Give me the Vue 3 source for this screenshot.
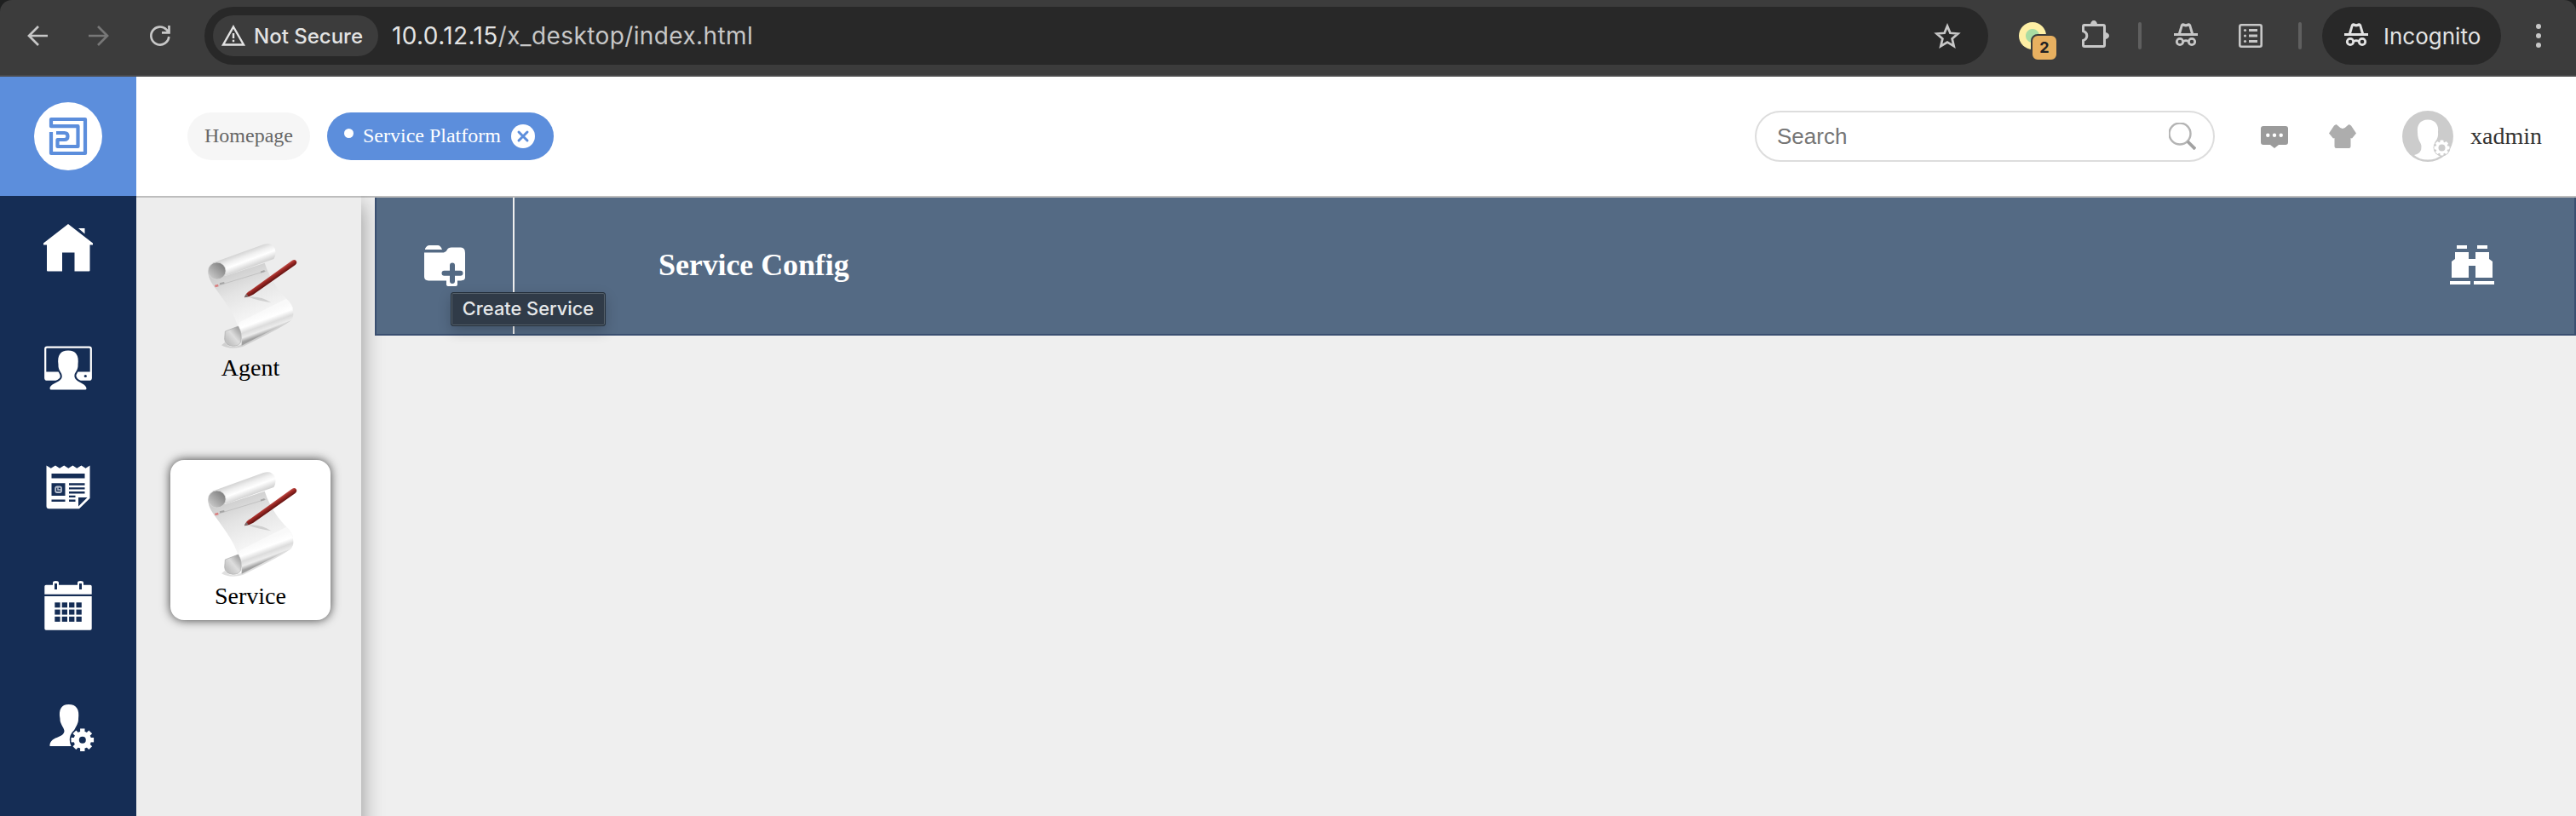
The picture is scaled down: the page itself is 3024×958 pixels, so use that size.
<script setup>
const tiles = [
  { name: 'Agent', active: false },
  { name: 'Service', active: true },
]
const calendarCells = [0, 1, 2].flatMap((r) => [0, 1, 2, 3].map((c) => ({ x: 64.3 + c * 8.4, y: 707.3 + r * 8.3 })))
const teeth = [0, 45, 90, 135, 180, 225, 270, 315]
</script>

<template>
  <div class="window">
    <div class="browser-frame">
      <div class="browser">
        <svg class="nav back" viewBox="30 28 28 28"><path d="M56 42H34M45 31L34 42L45 53" /></svg>
        <svg class="nav forward" viewBox="102 28 28 28"><path d="M104 42H126M115 31L126 42L115 53" /></svg>
        <svg class="nav reload" viewBox="174 28 28 28">
          <path d="M198.3 43A10.5 10.5 0 1 1 195.5 34.8L198 37.5M198.5 30V38.4H190" />
        </svg>
        <div class="omnibox">
          <div class="chip">
            <svg class="warn" viewBox="259 28 30 28">
              <path d="M274 31.5L286 52.5H262Z" fill="none" stroke="#e3e3e3" stroke-width="2.4" />
              <path d="M274 39V45M274 46.8V49.2" stroke="#e3e3e3" stroke-width="2.4" />
            </svg>
            <span>Not Secure</span>
          </div>
          <div class="url">10.0.12.15<span>/x_desktop/index.html</span></div>
          <svg class="star" viewBox="2270 24 34 34">
            <path d="M2286 29.5L2289.4 37.8L2298.4 38.5L2291.6 44.4L2293.7 53.2L2286 48.5L2278.3 53.2L2280.4 44.4L2273.6 38.5L2282.6 37.8Z" />
          </svg>
        </div>
        <div class="extension">
          <span class="disc"></span>
          <span class="badge">2</span>
        </div>
        <svg class="puzzle" viewBox="2440 22 40 40">
          <path d="M2446 29.5H2469Q2470.5 29.5 2470.5 31V53Q2470.5 54.5 2469 54.5H2447Q2445.5 54.5 2445.5 53V47.5Q2449.8 46 2449.8 42T2445.5 36.5V31Q2445.5 29.5 2447 29.5" fill="none" stroke="#c7c7c7" stroke-width="3" />
          <path d="M2454 29a4 5 0 0 1 8 0ZM2471 38a5 4 0 0 1 0 8Z" fill="#c7c7c7" />
        </svg>
        <i class="sep first"></i>
        <svg class="incog" viewBox="2548 24 36 36">
          <path d="M2552 39H2580V42H2552ZM2557 39L2560 29Q2561 27 2563 27.3L2566 28.3L2569 27.3Q2571 27 2572 29L2575 39H2571.8L2569.5 30.7L2566 31.6L2562.5 30.7L2560.2 39Z" fill="#c7c7c7" />
          <g fill="none" stroke="#c7c7c7" stroke-width="2.8"><circle cx="2559" cy="49" r="3.7" /><circle cx="2573" cy="49" r="3.7" /><path d="M2563 48.4Q2566 47 2569 48.4" /></g>
        </svg>
        <svg class="list" viewBox="2624 24 36 36">
          <rect x="2629.3" y="29.3" width="25.4" height="25.4" rx="2" fill="none" stroke="#c7c7c7" stroke-width="2.6" />
          <path d="M2640 35.5H2650M2640 42H2650M2640 48.5H2650" stroke="#c7c7c7" stroke-width="2.8" />
          <g fill="#c7c7c7"><circle cx="2635.5" cy="35.5" r="1.6" /><circle cx="2635.5" cy="42" r="1.6" /><circle cx="2635.5" cy="48.5" r="1.6" /></g>
        </svg>
        <i class="sep second"></i>
        <div class="incognito">
          <svg viewBox="2548 24 36 36">
            <path d="M2552 39H2580V42H2552ZM2557 39L2560 29Q2561 27 2563 27.3L2566 28.3L2569 27.3Q2571 27 2572 29L2575 39H2571.8L2569.5 30.7L2566 31.6L2562.5 30.7L2560.2 39Z" fill="#e3e3e3" />
            <g fill="none" stroke="#e3e3e3" stroke-width="2.8"><circle cx="2559" cy="49" r="3.7" /><circle cx="2573" cy="49" r="3.7" /><path d="M2563 48.4Q2566 47 2569 48.4" /></g>
          </svg>
          <span>Incognito</span>
        </div>
        <svg class="more" viewBox="2970 26 20 32"><g fill="#c7c7c7"><circle cx="2980" cy="31" r="3" /><circle cx="2980" cy="42" r="3" /><circle cx="2980" cy="53" r="3" /></g></svg>
      </div>
    </div>

    <header class="header">
      <div class="logo">
        <svg viewBox="40 120 80 80">
          <circle cx="80" cy="160" r="40" fill="#fff" />
          <path d="M92 148.200H60V140H100V180H60V155M60 148.200H91.500V172H67.500V164H75.500Q79.500 164 79.500 160T75.500 156H66" fill="none" stroke="#5c8edc" stroke-width="4.200" stroke-linejoin="round" />
        </svg>
      </div>
      <nav class="tabs">
        <div class="tab">Homepage</div>
        <div class="tab current">
          <i class="dot"></i><span>Service Platform</span>
          <svg viewBox="600 146 28 28">
            <circle cx="614" cy="160" r="14" fill="#fff" />
            <path d="M609 155L619 165M619 155L609 165" stroke="#5c8edc" stroke-width="3" stroke-linecap="round" />
          </svg>
        </div>
      </nav>
      <div class="search">
        <span>Search</span>
        <svg viewBox="2546 144 32 32" fill="none"><circle cx="2559" cy="157" r="12.5" stroke="#b4b4b4" stroke-width="2.4" /><path d="M2568 166L2577 175" stroke="#a2a2a2" stroke-width="3.8" /></svg>
      </div>
      <svg class="chat" viewBox="2654 144 32 32">
        <path d="M2657 148H2683Q2686 148 2686 151V167Q2686 170 2683 170H2675L2670 174L2665 170H2657Q2654 170 2654 167V151Q2654 148 2657 148Z" fill="#9b9b9b" />
        <g fill="#fff"><circle cx="2662.3" cy="158.7" r="2.2" /><circle cx="2670" cy="158.7" r="2.2" /><circle cx="2677.7" cy="158.7" r="2.2" /></g>
      </svg>
      <svg class="shirt" viewBox="2734 144 32 32">
        <path d="M2742.5 146L2745 148Q2750 154 2755 148L2757.5 146L2760 147.5L2766 156.5L2761 162.5L2759.5 162V172Q2759.5 174 2757.5 174H2742.5Q2740.5 174 2740.5 172V162L2739 162.5L2734 156.5L2740 147.5Z" fill="#adadad" />
      </svg>
      <svg class="avatar" viewBox="2820 130 60 60">
        <circle cx="2850" cy="160" r="30" fill="#ccc" />
        <path d="M2850 140.5C2859 140.5 2863 147 2862 155C2862.8 163 2859 165 2858 168C2857 175 2858 179 2866 182Q2860 187.5 2850 187.5T2834 182Q2843 180 2842.5 172C2842.5 167 2838 166 2838 155C2837 147 2841 140.5 2850 140.5Z" fill="#fff" />
        <g transform="translate(2866.5 173.5)">
          <circle r="10" fill="#ccc" />
          <g fill="#fff"><circle r="7" /><rect v-for="t in teeth" :key="t" x="-2" y="-9" width="4" height="5" rx="1" :transform="`rotate(${t})`" /></g>
          <circle r="4" fill="#ccc" />
        </g>
      </svg>
      <span class="user">xadmin</span>
    </header>

    <div class="body">
      <aside class="sidebar">
        <svg viewBox="48 260 64 64" fill="#fff">
          <path d="M80 263L109 285.5V287.5H105.5V317.5Q105.5 318.5 104.5 318.5H87.5V296.5H73V318.5H56Q55 318.5 55 317.5V287.5H51V285.5ZM92 268H99.5V274.5Z" />
        </svg>
        <svg viewBox="48 400 64 64">
          <rect x="53.2" y="407.7" width="53.6" height="38" rx="2" fill="none" stroke="#fff" stroke-width="2.2" />
          <path d="M53 436.5H107V446H53Z" fill="#fff" />
          <circle cx="100.3" cy="441.5" r="1.6" fill="#152d55" />
          <path d="M80 411.5C89 411.5 93 417 91.5 428C92 434 88 437 87.5 440C86 449 101 449 101.5 456Q101.5 457.5 100 457.5H60Q58.5 457.5 58.5 456C59 449 75 449 72.5 440C72 437 68 434 68.5 428C67 417 71 411.5 80 411.5Z" fill="#fff" stroke="#152d55" stroke-width="4" paint-order="stroke" />
        </svg>
        <svg viewBox="48 540 64 64">
          <path d="M54.5 546.5L59.8 549.8L65 546.5L70 549.8L75.2 546.5L80.3 549.8L85.4 546.5L90.3 549.8L95.5 546.5L100.5 549.8L105.5 546.5V585L93 597.3H57.5Q54.5 597.3 54.5 594.3Z" fill="#fff" />
          <path d="M60.5 556H99.5V561.5H60.5ZM60.5 567.3H76.5V582H60.5ZM81 567.3H99.5V569.8H81ZM81 572.3H99.5V574.6H81ZM81 577H99.5V579.4H81ZM81 581.8H88.5V584H81ZM81 586.5H88.5V589H81ZM60.5 586.5H76.5V589H60.5ZM92 584H102.5L92 594.5Z" fill="#152d55" />
          <rect x="65.200" y="571.500" width="6.800" height="6.500" rx="1.800" fill="none" stroke="#b9c1cf" stroke-width="1.800" />
          <path d="M68 572V575H72" fill="none" stroke="#b9c1cf" stroke-width="1.400" />
        </svg>
        <svg viewBox="48 680 64 64">
          <path d="M54 686.7H62V684Q62 682 65.5 682T69 684V686.7H91V684Q91 682 94.5 682T98 684V686.7H106Q107.7 686.7 107.7 688.5V697.7H52.3V688.5Q52.3 686.7 54 686.7ZM52.3 700H107.7V738Q107.7 739.7 106 739.7H54Q52.3 739.7 52.3 738Z" fill="#fff" />
          <path d="M64 685H67V692H64ZM93 685H96V692H93Z" fill="#152d55" />
          <rect v-for="(c, i) in calendarCells" :key="i" :x="c.x" :y="c.y" width="6.3" height="6" fill="#152d55" />
        </svg>
        <svg viewBox="48 820 64 64">
          <path d="M80.5 827C90 827 93.500 833 92 844C92.500 850 86.500 856 86.500 860L88 876H58.500C58 864 75.500 867 75.500 858C75 854 70 849 70.500 844C68.500 833 72 827 80.500 827Z" fill="#fff" />
          <g transform="translate(96.800 868.700)">
            <circle r="15" fill="#152d55" />
            <g fill="#fff"><circle r="10.300" /><rect v-for="t in teeth" :key="t" x="-2.700" y="-13.300" width="5.400" height="6" :transform="`rotate(${t})`" /></g>
            <circle r="4" fill="#152d55" />
          </g>
        </svg>
      </aside>

      <section class="modules">
        <div v-for="tile in tiles" :key="tile.name" class="tile" :class="{ active: tile.active }">
          <svg viewBox="240 120 336 384">
            <defs>
              <linearGradient id="roll" gradientUnits="userSpaceOnUse" x1="364" y1="162" x2="388" y2="226">
                <stop offset="0" stop-color="#cfcfcf" /><stop offset="0.3" stop-color="#efefef" /><stop offset="0.55" stop-color="#ffffff" /><stop offset="1" stop-color="#c8c8c8" />
              </linearGradient>
              <linearGradient id="hollow" x1="0.9" y1="0.2" x2="0.2" y2="0.9">
                <stop offset="0" stop-color="#808080" /><stop offset="1" stop-color="#c6c6c6" />
              </linearGradient>
              <linearGradient id="curl" x1="1" y1="0" x2="0.2" y2="0.8">
                <stop offset="0" stop-color="#8c8c8c" /><stop offset="0.6" stop-color="#dedede" /><stop offset="1" stop-color="#c2c2c2" />
              </linearGradient>
              <linearGradient id="base" gradientUnits="userSpaceOnUse" x1="440" y1="375" x2="466" y2="446">
                <stop offset="0" stop-color="#f9f9f9" /><stop offset="0.35" stop-color="#ffffff" /><stop offset="0.6" stop-color="#dcdcdc" /><stop offset="0.8" stop-color="#ececec" /><stop offset="1" stop-color="#a0a0a0" />
              </linearGradient>
              <linearGradient id="paper" gradientUnits="userSpaceOnUse" x1="340" y1="225" x2="410" y2="410">
                <stop offset="0" stop-color="#cdcdcd" /><stop offset="0.4" stop-color="#e4e4e4" /><stop offset="1" stop-color="#f8f8f8" />
              </linearGradient>
              <linearGradient id="pen" gradientUnits="userSpaceOnUse" x1="467" y1="246" x2="478" y2="262">
                <stop offset="0" stop-color="#c65a54" /><stop offset="0.45" stop-color="#a02a26" /><stop offset="1" stop-color="#6b1715" />
              </linearGradient>
            </defs>
            <path d="M312 480Q330 505 365 490L548 400Q520 425 375 495Q330 508 300 490Z" fill="#000" opacity="0.12" />
            <path d="M252 228C254 262 272 280 292 308C322 350 348 388 358 424L372 455L552 360C545 335 520 322 495 286C475 256 462 230 452 200L316 245Z" fill="url(#paper)" />
            <path d="M358 424Q374 452 371 491L546 401Q556 388 552 368Q548 342 528 326L365 408Z" fill="url(#base)" />
            <path d="M313 441L359 423Q374 450 368 478Q362 493 340 493Q312 490 311 468Z" fill="url(#curl)" stroke="#aaa" stroke-width="2" />
            <path d="M268 200L448 135Q477 126 488 150Q494 172 484 186L316 245Z" fill="url(#roll)" />
            <ellipse cx="284" cy="228" rx="31" ry="30" fill="url(#hollow)" stroke="#d6d6d6" stroke-width="2" />
            <path d="M290 279L458 228" stroke="#c2c2c2" stroke-width="3" />
            <path d="M277 282L289 279" stroke="#d98080" stroke-width="8" />
            <path d="M294 274L310 270M438 233L452 228" stroke="#a5a5a5" stroke-width="6" />
            <path d="M395 320Q440 315 475 340Q430 332 395 320Z" fill="#999" opacity="0.35" />
            <path d="M381 322Q386 304 402 297L549 191Q558 186 563 193T560 207L412 311Q398 320 381 322Z" fill="url(#pen)" />
            <path d="M381 322Q383 314 389 309L394 318Z" fill="#777" />
          </svg>
          <span>{{ tile.name }}</span>
        </div>
      </section>

      <main class="content">
        <div class="toolbar">
          <div class="create">
            <svg viewBox="498 288 48 48">
              <path d="M499 292Q501 288 504 288H514Q517 288 519 293H499ZM498 296.500H521Q524 296 525 293Q526 290.500 530 290.500H541Q546 290.500 546 297V326Q546 329 541 329.500H537V334Q537 336 534 336H527Q524 336 524 334V329.500H503Q498 329 498 325Z" fill="#fff" />
              <path d="M531 311.500V330M521.500 320.800H540.500" stroke="#546a84" stroke-width="6" stroke-linecap="round" />
            </svg>
            <div class="tooltip">Create Service</div>
          </div>
          <h1>Service Config</h1>
          <svg class="find" viewBox="2874 284 56 54" fill="#fff">
            <path d="M2884 288H2896V292H2884ZM2908 288H2920V292H2908ZM2882 296H2898V304H2906V296H2922V304L2926 307V326H2906V312H2898V326H2878V307L2882 304ZM2876 330H2900V334H2876ZM2904 330H2928V334H2904Z" />
          </svg>
        </div>
      </main>
    </div>
  </div>
</template>

<style>
body { margin: 0; }
</style>

<style scoped>
* { box-sizing: border-box; }
svg { display: block; flex: none; }
.window { width: 3024px; height: 958px; overflow: hidden; display: flex; flex-direction: column; background: #efefef; font-family: "Liberation Serif", serif; }
.browser-frame { height: 90px; flex: none; background: #1f2020; }
.browser { height: 90px; display: flex; align-items: center; padding: 0 34px 6px 30px; background: #3c3c3c; border-bottom: 2px solid #4a4a4b; border-radius: 14px 14px 0 0; font-family: Inter, sans-serif; }
.nav { width: 28px; height: 28px; fill: none; stroke: #c7c7c7; stroke-width: 2.7; margin-top: 2px; }
.forward { stroke: #777; margin-left: 44px; }
.reload { margin-left: 44px; }
.omnibox { flex: 1; height: 68px; margin: 2px 0 0 38px; padding: 0 30px 0 10px; display: flex; align-items: center; border-radius: 34px; background: #282828; }
.chip { width: 194px; height: 48px; padding-left: 9px; display: flex; align-items: center; border-radius: 24px; background: #3c3c3c; color: #e3e3e3; font-size: 24px; font-weight: 500; white-space: nowrap; }
.warn { width: 30px; height: 28px; margin-right: 9px; }
.url { flex: 1; margin-left: 16px; font-size: 28px; letter-spacing: 0.39px; color: #e3e3e3; white-space: nowrap; }
.url span { color: #c7c7c7; }
.star { width: 34px; height: 34px; fill: none; stroke: #c7c7c7; stroke-width: 2.7; }
.extension { position: relative; width: 52px; height: 52px; margin: 20px 0 0 32px; }
.disc { position: absolute; left: 4px; top: 1px; width: 32px; height: 32px; border-radius: 50%; background: radial-gradient(circle, #a9dca3 0 7.5px, #feefa5 8.5px); }
.badge { position: absolute; left: 18px; top: 15px; width: 32px; height: 32px; border-radius: 8px; background: #e8b060; border: 2px solid #3c3c3c; color: #202124; font-size: 18px; font-weight: 700; line-height: 28px; text-align: center; }
.puzzle { width: 40px; height: 40px; margin: 2px 0 0 22px; }
.sep { width: 4px; height: 32px; border-radius: 2px; background: #5f5f5f; margin-top: 2px; }
.first { margin-left: 30px; }
.incog { width: 36px; height: 36px; margin: 2px 0 0 34px; }
.list { width: 36px; height: 36px; margin: 2px 0 0 40px; }
.second { margin-left: 38px; }
.incognito { width: 210px; height: 68px; margin: 2px 0 0 24px; padding-left: 22px; display: flex; align-items: center; border-radius: 34px; background: #282828; color: #e3e3e3; font-size: 26px; }
.incognito svg { width: 36px; height: 36px; margin-right: 14px; }
.more { width: 20px; height: 32px; margin: 2px 0 0 34px; }

.header { position: relative; z-index: 2; height: 140px; flex: none; display: flex; align-items: center; background: #fff; }
.logo { width: 160px; height: 140px; display: flex; align-items: center; justify-content: center; background: #5c8edc; }
.logo svg { width: 80px; height: 80px; }
.tabs { flex: 1; display: flex; gap: 20px; padding-left: 60px; font-size: 24px; }
.tab { height: 56px; padding: 0 20px 2px; display: flex; align-items: center; border-radius: 28px; background: #f6f6f6; color: #666; white-space: nowrap; }
.current { width: 266px; padding: 0 22px 2px 20px; background: #5c8edc; color: #fff; }
.dot { width: 11px; height: 11px; margin: -5px 11px 0 0; border-radius: 50%; background: #fff; }
.current svg { width: 28px; height: 28px; margin: 2px 0 0 auto; }
.search { width: 540px; height: 60px; padding: 0 20px 0 24px; display: flex; align-items: center; justify-content: space-between; border: 2px solid #ddd; border-radius: 30px; color: #757575; font: 26px "Liberation Sans", sans-serif; }
.search svg { width: 32px; height: 32px; }
.chat { width: 32px; height: 32px; margin-left: 54px; }
.shirt { width: 32px; height: 32px; margin-left: 48px; }
.avatar { width: 60px; height: 60px; margin-left: 54px; }
.user { width: 124px; margin-left: 20px; font-size: 28px; color: #333; }

.body { flex: 1; min-height: 0; display: flex; }
.sidebar { width: 160px; position: relative; z-index: 3; display: flex; flex-direction: column; align-items: center; gap: 76px; padding-top: 30px; background: #152d55; }
.sidebar svg { width: 64px; height: 64px; }
.modules { width: 264px; position: relative; z-index: 1; margin-bottom: -40px; border-top: 2px solid #bdbdbd; display: flex; flex-direction: column; gap: 80px; padding: 40px 0 0 40px; background: #ededed; box-shadow: 0 10px 24px rgba(0, 0, 0, 0.4); }
.tile { width: 188px; height: 188px; padding-top: 10px; display: flex; flex-direction: column; align-items: center; border-radius: 16px; font-size: 28px; line-height: 32px; color: #000; }
.tile svg { width: 112px; height: 128px; margin-left: 4px; }
.tile span { margin-top: 6px; }
.active { background: #fff; box-shadow: 0 0 12px rgba(0, 0, 0, 0.75); }
.content { flex: 1; padding-left: 16px; border-top: 2px solid #bdbdbd; background: #efefef; }
.toolbar { position: relative; z-index: 2; height: 162px; display: flex; align-items: center; border: 2px solid #3a4f70; border-top: 0; background: #546a84; }
.create { position: relative; align-self: stretch; width: 162px; padding: 56px 0 0 56px; border-right: 2px solid #efefef; }
.create svg { width: 48px; height: 48px; }
.tooltip { position: absolute; left: 87px; top: 111px; width: 182px; height: 40px; border: 1px solid #232e39; border-radius: 3px; box-shadow: inset 0 0 0 1px #56616b, 0 6px 16px rgba(0, 0, 0, 0.2); background: #303b48; color: #e6e8e9; font: 500 21.8px/36px Inter, sans-serif; text-align: center; white-space: nowrap; }
h1 { flex: 1; margin: 0 0 3px 169px; color: #fff; font-size: 36px; line-height: 42px; letter-spacing: -0.1px; font-variant-ligatures: common-ligatures; }
.find { width: 56px; height: 54px; margin: 0 92px 2px 0; }
</style>
